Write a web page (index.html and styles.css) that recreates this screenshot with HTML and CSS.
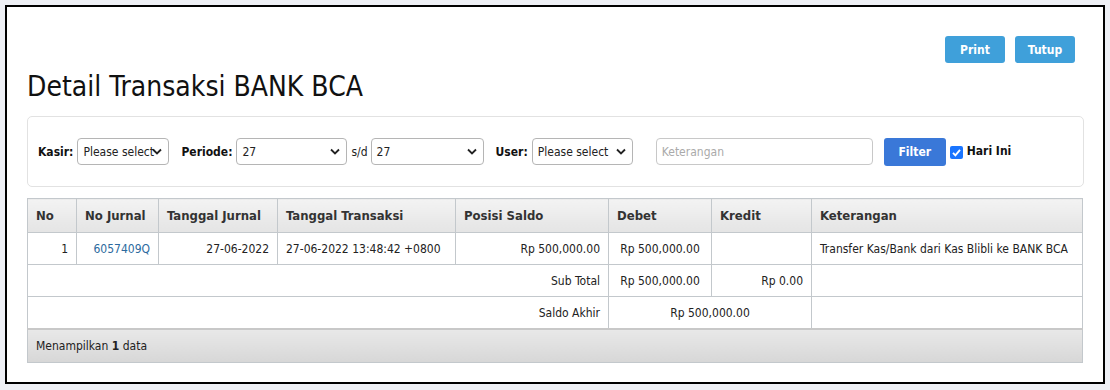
FILE: index.html
```html
<!DOCTYPE html>
<html>
<head>
<meta charset="utf-8">
<link rel="stylesheet" href="styles.css">
</head>
<body>
<div class="frame">
  <div class="topbar">
    <button class="btn btn-light">Print</button>
    <button class="btn btn-light">Tutup</button>
  </div>
  <h1 class="title">Detail Transaksi BANK BCA</h1>
  <div class="filter">
    <label class="lbl">Kasir:</label>
    <div class="sel w-kasir"><span class="sel-text">Please select</span><svg class="chev" width="10" height="7" viewBox="0 0 10 7"><path d="M1 1.5 L5 5.5 L9 1.5" fill="none" stroke="#222" stroke-width="1.8"/></svg></div>
    <label class="lbl gap-l">Periode:</label>
    <div class="sel w-per"><span class="sel-text">27</span><svg class="chev" width="10" height="7" viewBox="0 0 10 7"><path d="M1 1.5 L5 5.5 L9 1.5" fill="none" stroke="#222" stroke-width="1.8"/></svg></div>
    <span class="sd">s/d</span>
    <div class="sel w-per2"><span class="sel-text">27</span><svg class="chev" width="10" height="7" viewBox="0 0 10 7"><path d="M1 1.5 L5 5.5 L9 1.5" fill="none" stroke="#222" stroke-width="1.8"/></svg></div>
    <label class="lbl gap-l">User:</label>
    <div class="sel w-user"><span class="sel-text">Please select</span><svg class="chev" width="10" height="7" viewBox="0 0 10 7"><path d="M1 1.5 L5 5.5 L9 1.5" fill="none" stroke="#222" stroke-width="1.8"/></svg></div>
    <div class="inp"><span class="ph">Keterangan</span></div>
    <button class="btn btn-filter">Filter</button>
    <span class="chk"><svg width="13" height="13" viewBox="0 0 13 13"><rect x="0" y="0" width="13" height="13" rx="2" fill="#1a75ff"/><path d="M3 6.8 L5.4 9.3 L10 3.8" fill="none" stroke="#fff" stroke-width="1.9"/></svg></span>
    <span class="lbl hari">Hari Ini</span>
  </div>
  <table class="grid">
    <thead>
      <tr>
        <th class="c-no">No</th>
        <th class="c-nj">No Jurnal</th>
        <th class="c-tj">Tanggal Jurnal</th>
        <th class="c-tt">Tanggal Transaksi</th>
        <th class="c-ps">Posisi Saldo</th>
        <th class="c-db">Debet</th>
        <th class="c-kr">Kredit</th>
        <th class="c-kt">Keterangan</th>
      </tr>
    </thead>
    <tbody>
      <tr>
        <td class="r">1</td>
        <td class="r"><a class="link">6057409Q</a></td>
        <td class="r">27-06-2022</td>
        <td>27-06-2022 13:48:42 +0800</td>
        <td class="r">Rp 500,000.00</td>
        <td class="c">Rp 500,000.00</td>
        <td></td>
        <td>Transfer Kas/Bank dari Kas Blibli ke BANK BCA</td>
      </tr>
      <tr>
        <td class="r" colspan="5">Sub Total</td>
        <td class="c">Rp 500,000.00</td>
        <td class="r">Rp 0.00</td>
        <td></td>
      </tr>
      <tr>
        <td class="r" colspan="5">Saldo Akhir</td>
        <td class="c" colspan="2">Rp 500,000.00</td>
        <td></td>
      </tr>
    </tbody>
    <tfoot>
      <tr>
        <td colspan="8" class="foot">Menampilkan <b>1</b> data</td>
      </tr>
    </tfoot>
  </table>
</div>
</body>
</html>
```

FILE: styles.css
```css
html, body {
  margin: 0;
  padding: 0;
  background: #eef0f5;
}
body {
  padding: 5px 0 0 5px;
  font-family: "DejaVu Sans Condensed", "DejaVu Sans", sans-serif;
  font-stretch: condensed;
  font-size: 12px;
  color: #222;
}
.frame {
  box-sizing: border-box;
  width: 1100px;
  height: 379px;
  border: 2px solid #000;
  background: #fff;
  padding: 29px 19px 0 20px;
}
.topbar {
  display: flex;
  justify-content: flex-end;
  gap: 10px;
  padding-right: 9px;
}
.btn {
  font-family: inherit;
  font-stretch: condensed;
  font-weight: bold;
  font-size: 12px;
  color: #fff;
  border: 0;
  border-radius: 3px;
  cursor: pointer;
}
.btn-light {
  background: #3fa0da;
  width: 60px;
  height: 27px;
}
.title {
  margin: 8px 0 0 0;
  font-weight: normal;
  font-size: 28px;
  line-height: 32px;
  color: #111;
}
.filter {
  margin-top: 13px;
  height: 71px;
  box-sizing: border-box;
  border: 1px solid #e2e2e2;
  border-radius: 5px;
  display: flex;
  align-items: center;
  padding: 0 0 0 10px;
}
.lbl {
  font-weight: bold;
  color: #111;
}
.gap-l { margin-left: 12px; }
.sel {
  position: relative;
  box-sizing: border-box;
  height: 27px;
  border: 1px solid #b5b5b5;
  border-radius: 4px;
  margin-left: 4px;
  display: flex;
  align-items: center;
  padding-left: 5px;
  background: #fff;
}
.chev {
  position: absolute;
  right: 6px;
  top: 9px;
}
.w-kasir { width: 92px; }
.w-per { width: 111px; }
.w-per2 { width: 113px; margin-left: 3px; }
.w-user { width: 101px; }
.sd { margin-left: 4px; }
.inp {
  box-sizing: border-box;
  width: 217px;
  height: 27px;
  border: 1px solid #c8c8c8;
  border-radius: 4px;
  margin-left: 23px;
  display: flex;
  align-items: center;
  padding-left: 5px;
}
.ph { color: #aaa; }
.btn-filter {
  background: #3a78d8;
  width: 62px;
  height: 28px;
  margin-left: 11px;
}
.chk {
  display: flex;
  margin-left: 4px;
  margin-top: 2px;
}
.hari { margin-left: 4px; margin-top: -2px; }

.grid {
  margin-top: 11px;
  width: 1056px;
  border-collapse: collapse;
  table-layout: fixed;
}
.grid th, .grid td {
  border: 1px solid #c3c8cc;
  padding: 0 8px;
  text-align: left;
  white-space: nowrap;
}
.grid th {
  height: 33px;
  font-weight: bold;
  font-size: 13px;
  color: #333;
  background: linear-gradient(#f3f3f3, #e4e4e4);
}
.grid td {
  height: 31px;
}
.c-no { width: 32px; }
.c-nj { width: 65px; }
.c-tj { width: 102px; }
.c-tt { width: 161px; }
.c-ps { width: 136px; }
.c-db { width: 86px; }
.c-kr { width: 83px; }
.grid td.r { text-align: right; }
.grid td.c { text-align: center; }
.link { color: #2c6a9e; text-decoration: none; }
.grid td.foot {
  height: 32px;
  background: linear-gradient(#e8e8e8, #d7d7d7);
  border-top: 2px solid #c8c8c8;
}
```
